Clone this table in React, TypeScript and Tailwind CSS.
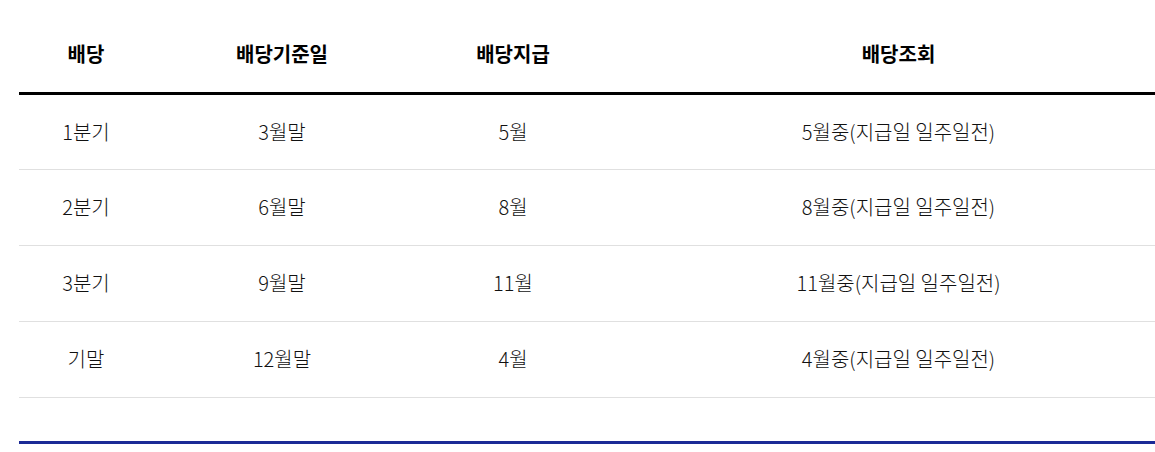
const rows = [
  { period: "1분기", base: "3월말", pay: "5월", check: "5월중(지급일 일주일전)" },
  { period: "2분기", base: "6월말", pay: "8월", check: "8월중(지급일 일주일전)" },
  { period: "3분기", base: "9월말", pay: "11월", check: "11월중(지급일 일주일전)" },
  { period: "기말", base: "12월말", pay: "4월", check: "4월중(지급일 일주일전)" },
];

export default function App() {
  return (
    <div
      className="w-[1155px] h-[452px] overflow-hidden bg-white pt-[16px] pl-[19px]"
      style={{ fontFamily: '"Noto Sans CJK KR", "Noto Sans", sans-serif' }}
    >
      <table className="w-[1163px] table-fixed border-collapse text-center">
        <colgroup>
          <col className="w-[134px]" />
          <col className="w-[258px]" />
          <col className="w-[204px]" />
          <col />
        </colgroup>
        <thead>
          <tr className="border-b-[3px] border-black">
            <th className="h-[77px] p-0 text-[20px] font-bold text-black">배당</th>
            <th className="h-[77px] p-0 text-[20px] font-bold text-black">배당기준일</th>
            <th className="h-[77px] p-0 text-[20px] font-bold text-black">배당지급</th>
            <th className="h-[77px] p-0 text-[20px] font-bold text-black">배당조회</th>
          </tr>
        </thead>
        <tbody>
          {rows.map((row) => (
            <tr key={row.period} className="border-b border-[#e0e0e0]">
              <td className="h-[76px] p-0 text-[20px] font-light text-[#111]">{row.period}</td>
              <td className="h-[76px] p-0 text-[20px] font-light text-[#111]">{row.base}</td>
              <td className="h-[76px] p-0 text-[20px] font-light text-[#111]">{row.pay}</td>
              <td className="h-[76px] p-0 text-[20px] font-light text-[#111]">{row.check}</td>
            </tr>
          ))}
        </tbody>
      </table>
      <div className="mt-[43px] h-[3px] w-[1163px] bg-[#1b2a96]" />
    </div>
  );
}
